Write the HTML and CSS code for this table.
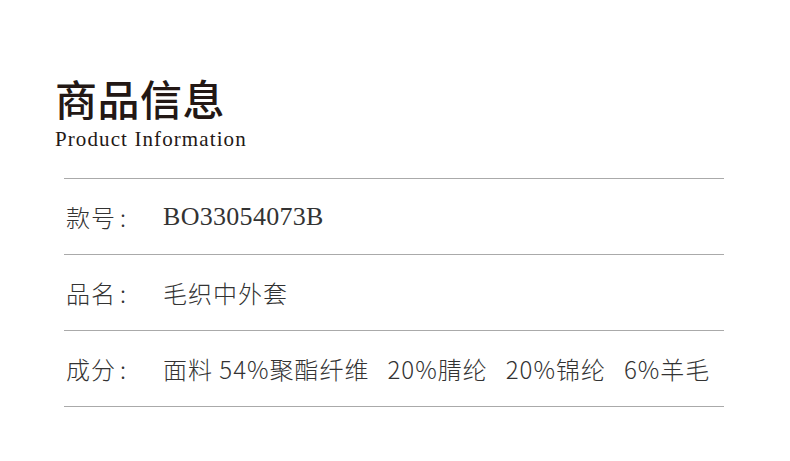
FILE: index.html
```html
<!DOCTYPE html>
<html lang="zh">
<head>
<meta charset="utf-8">
<link rel="stylesheet" href="styles.css">
</head>
<body>
<div class="page">
  <div class="header">
    <h1 class="title">商品信息</h1>
    <div class="subtitle">Product Information</div>
  </div>
  <div class="table">
    <div class="row"><span class="label">款号<span class="colon">:</span></span><span class="value serif">BO33054073B</span></div>
    <div class="row"><span class="label">品名<span class="colon">:</span></span><span class="value">毛织中外套</span></div>
    <div class="row"><span class="label">成分<span class="colon">:</span></span><span class="value">面料 54%聚酯纤维<span class="gap"></span>20%腈纶<span class="gap"></span>20%锦纶<span class="gap"></span>6%羊毛</span></div>
  </div>
</div>
</body>
</html>
```
FILE: styles.css
```css
html, body { margin: 0; padding: 0; background: #fff; }
.page { width: 790px; height: 461px; box-sizing: border-box; padding-top: 72px; }
.header { padding-left: 55px; }
.title {
  margin: 0;
  font-family: "Noto Sans CJK SC", sans-serif;
  font-weight: 500;
  font-size: 42px;
  line-height: 52px;
  color: #231815;
  letter-spacing: 0.5px;
}
.subtitle {
  font-family: "Liberation Serif", serif;
  font-size: 21px;
  line-height: 24px;
  letter-spacing: 1.1px;
  color: #231815;
  margin-top: 3px;
}
.table { margin: 27px 66px 0 64px; border-top: 1px solid #aaa; }
.row {
  height: 75px;
  border-bottom: 1px solid #aaa;
  display: flex;
  align-items: center;
  font-family: "Noto Sans CJK SC", sans-serif;
  font-weight: 300;
  font-size: 24px;
  color: #333;
  padding-left: 2px;
  letter-spacing: 1px;
}
.label { width: 97px; }
.colon { margin-left: 4px; }
.gap { display: inline-block; width: 18px; }
.serif { font-family: "Liberation Serif", serif; font-size: 26px; letter-spacing: 0.3px; }
```
